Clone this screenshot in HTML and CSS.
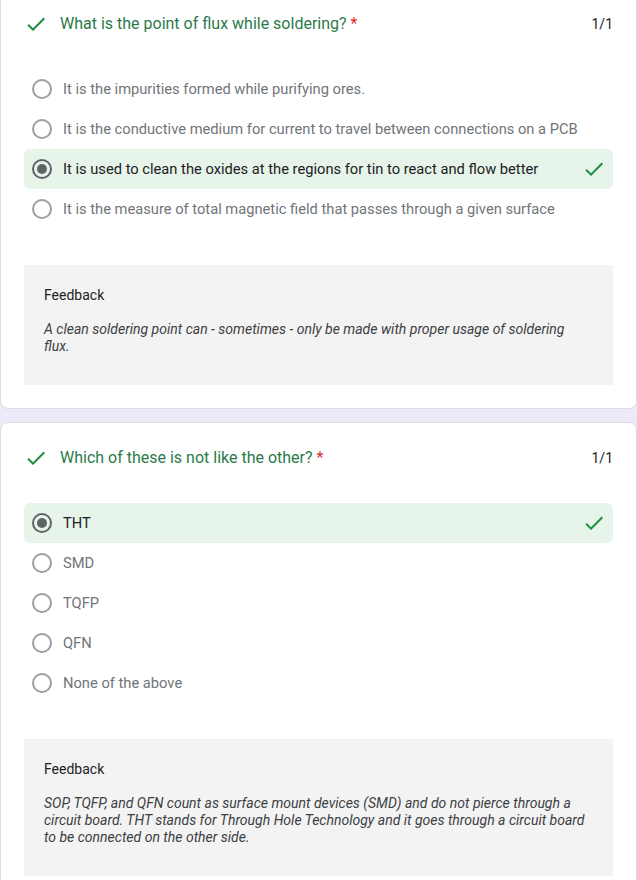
FILE: index.html
```html
<!DOCTYPE html>
<html lang="en">
<head>
<meta charset="utf-8">
<title>Quiz results</title>
<link rel="stylesheet" href="styles.css">
</head>
<body>
<main class="page">
  <section class="card card--first">
    <header class="q-head">
      <svg class="q-check" viewBox="0 0 24 24" width="24" height="24"><path d="M9 16.17L4.83 12l-1.42 1.41L9 19 21 7l-1.41-1.41z"/></svg>
      <h2 class="q-title">What is the point of flux while soldering? <span class="req">*</span></h2>
      <span class="q-score">1/1</span>
    </header>
    <ul class="options">
      <li class="opt"><span class="radio"></span><span class="opt-text">It is the impurities formed while purifying ores.</span></li>
      <li class="opt"><span class="radio"></span><span class="opt-text">It is the conductive medium for current to travel between connections on a PCB</span></li>
      <li class="opt opt--correct"><span class="radio radio--on"></span><span class="opt-text">It is used to clean the oxides at the regions for tin to react and flow better</span><svg class="opt-check" viewBox="0 0 24 24" width="24" height="24"><path d="M9 16.17L4.83 12l-1.42 1.41L9 19 21 7l-1.41-1.41z"/></svg></li>
      <li class="opt"><span class="radio"></span><span class="opt-text">It is the measure of total magnetic field that passes through a given surface</span></li>
    </ul>
    <div class="feedback">
      <div class="fb-label">Feedback</div>
      <p class="fb-text">A clean soldering point can - sometimes - only be made with proper usage of soldering flux.</p>
    </div>
  </section>

  <section class="card">
    <header class="q-head">
      <svg class="q-check" viewBox="0 0 24 24" width="24" height="24"><path d="M9 16.17L4.83 12l-1.42 1.41L9 19 21 7l-1.41-1.41z"/></svg>
      <h2 class="q-title">Which of these is not like the other? <span class="req">*</span></h2>
      <span class="q-score">1/1</span>
    </header>
    <ul class="options">
      <li class="opt opt--correct"><span class="radio radio--on"></span><span class="opt-text">THT</span><svg class="opt-check" viewBox="0 0 24 24" width="24" height="24"><path d="M9 16.17L4.83 12l-1.42 1.41L9 19 21 7l-1.41-1.41z"/></svg></li>
      <li class="opt"><span class="radio"></span><span class="opt-text">SMD</span></li>
      <li class="opt"><span class="radio"></span><span class="opt-text">TQFP</span></li>
      <li class="opt"><span class="radio"></span><span class="opt-text">QFN</span></li>
      <li class="opt"><span class="radio"></span><span class="opt-text">None of the above</span></li>
    </ul>
    <div class="feedback">
      <div class="fb-label">Feedback</div>
      <p class="fb-text">SOP, TQFP, and QFN count as surface mount devices (SMD) and do not pierce through a circuit board. THT stands for Through Hole Technology and it goes through a circuit board to be connected on the other side.</p>
    </div>
  </section>
</main>
</body>
</html>
```
FILE: styles.css
```css
* { box-sizing: border-box; }
html, body { margin: 0; padding: 0; }
body {
  background: #ece9f8;
  font-family: Roboto, "Liberation Sans", Arial, sans-serif;
  color: #202124;
}
.page {
  display: flex;
  flex-direction: column;
  gap: 13px;
}
.card {
  background: #fff;
  border: 1px solid #dadce0;
  border-radius: 8px;
  padding: 23px 23px 23px 23px;
}
.card--first {
  margin-top: -12px;
}
.q-head {
  display: flex;
  align-items: center;
  height: 24px;
}
.q-check {
  width: 24px;
  height: 24px;
  fill: #1e8e3e;
  flex: none;
}
.q-title {
  margin: 0 0 0 12px;
  font-size: 16px;
  font-weight: 400;
  color: #2a7a4b;
  flex: 1;
  line-height: 24px;
}
.req { color: #d93025; }
.q-score {
  font-size: 14px;
  color: #202124;
}
.options {
  list-style: none;
  margin: 33px 0 0 0;
  padding: 0;
}
.opt {
  display: flex;
  align-items: center;
  height: 40px;
  padding: 0 7px 0 8px;
  border-radius: 6px;
  font-size: 14.7px;
  color: #70757a;
}
.opt--correct {
  background: #e6f4ea;
  color: #202124;
}
.radio {
  flex: none;
  width: 20px;
  height: 20px;
  border: 2px solid #9e9e9e;
  border-radius: 50%;
  display: flex;
  align-items: center;
  justify-content: center;
}
.radio--on { border-color: #5f6368; }
.radio--on::after {
  content: "";
  width: 10px;
  height: 10px;
  border-radius: 50%;
  background: #5f6368;
}
.opt-text {
  margin-left: 11px;
  flex: 1;
}
.opt-check {
  flex: none;
  width: 24px;
  height: 24px;
  fill: #1e8e3e;
}
.feedback {
  margin-top: 36px;
  background: #f3f3f3;
  padding: 20px 20px 30px 20px;
}
.fb-label {
  font-size: 14px;
  line-height: 20px;
  color: #202124;
}
.fb-text {
  margin: 16px 0 0 0;
  font-size: 14px;
  line-height: 17px;
  font-style: italic;
  color: #3c4043;
}
```
